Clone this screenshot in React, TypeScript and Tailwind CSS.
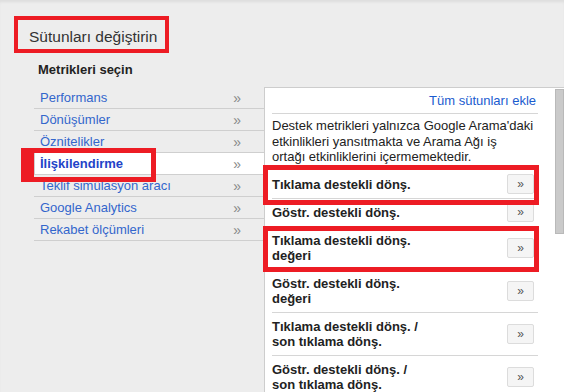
const menu = [
  { label: "Performans" },
  { label: "Dönüşümler" },
  { label: "Öznitelikler" },
  { label: "İlişkilendirme", active: true },
  { label: "Teklif simülasyon aracı" },
  { label: "Google Analytics" },
  { label: "Rekabet ölçümleri" },
];

const metrics = [
  ["Tıklama destekli dönş."],
  ["Göstr. destekli dönş."],
  ["Tıklama destekli dönş.", "değeri"],
  ["Göstr. destekli dönş.", "değeri"],
  ["Tıklama destekli dönş. /", "son tıklama dönş."],
  ["Göstr. destekli dönş. /", "son tıklama dönş."],
];

function MetricRow({ lines }: { lines: string[] }) {
  return (
    <div
      className={
        lines.length === 1
          ? "flex h-[28px] items-center justify-between border-b border-[#d6d6d6] pr-[4px]"
          : "flex h-[43px] items-center justify-between border-b border-[#d6d6d6] pr-[4px]"
      }
    >
      <div className="text-[13px] font-bold leading-[15px] text-[#222]">
        {lines.map((line) => (
          <div key={line}>{line}</div>
        ))}
      </div>
      <button className="flex h-[20px] w-[27px] items-center justify-center rounded-[2px] border border-[#dcdcdc] bg-[#f5f5f5] text-[12px] leading-none text-[#555]">
        »
      </button>
    </div>
  );
}

export default function App() {
  return (
    <div className="relative h-[392px] w-[564px] overflow-hidden bg-[#ededed] font-['Liberation_Sans',Arial,sans-serif] shadow-[inset_0_3px_3px_-1px_rgba(0,0,0,0.07)]">
      <div className="flex pt-[27px]">
        <span className="ml-[29px] text-[15.5px] leading-[20px] text-[#333]">Sütunları değiştirin</span>
      </div>
      <div className="mt-[15px] pl-[38px] text-[13px] font-bold leading-[16px] text-[#222]">Metrikleri seçin</div>

      <div className="mt-[9px] flex">
        <div className="ml-[34px] w-[230px]">
          {menu.map((item) => (
            <div
              key={item.label}
              className={
                item.active
                  ? "flex h-[22px] items-center justify-between border-b border-l border-[#cfcfcf] bg-white pl-[5px] pr-[23px]"
                  : "flex h-[22px] items-center justify-between border-b border-[#cfcfcf] pl-[6px] pr-[23px]"
              }
            >
              <span
                className={
                  item.active
                    ? "text-[13px] font-bold text-[#2243c8]"
                    : "text-[13px] text-[#3366cc]"
                }
              >
                {item.label}
              </span>
              <span className="text-[14px] leading-none text-[#888]">»</span>
            </div>
          ))}
        </div>

        <div className="flex h-[305px] flex-1 border-l border-t border-[#cdcdcd] bg-white">
          <div className="w-[290px] pl-[7px] pr-[17px]">
            <div className="border-b border-[#d6d6d6] pb-[4px] pt-[5px] pr-[2px] text-right text-[13px] leading-[16px] text-[#1a5ccf]">
              Tüm sütunları ekle
            </div>
            <div className="pb-[6px] pt-[4px] text-[13px] leading-[15.5px] text-[#222]">
              Destek metrikleri yalnızca Google Arama'daki
              <br />
              etkinlikleri yansıtmakta ve Arama Ağı iş
              <br />
              ortağı etkinliklerini içermemektedir.
            </div>
            {metrics.map((lines) => (
              <MetricRow key={lines.join(" ")} lines={lines} />
            ))}
          </div>
          <div className="flex-1 pt-[1px]">
            <div className="h-[145px] border border-[#b9b9b9] bg-[#cacaca]" />
          </div>
        </div>
      </div>

      {/* annotation boxes */}
      <div className="absolute left-[14px] top-[16px] h-[37px] w-[155px] border-[4px] border-[#ed1c24]" />
      <div className="absolute left-[21px] top-[148px] h-[34px] w-[135px] border-y-[5px] border-l-[13px] border-r-[5px] border-[#ed1c24]" />
      <div className="absolute left-[263px] top-[165px] h-[40px] w-[276px] border-[5px] border-[#ed1c24]" />
      <div className="absolute left-[263px] top-[226px] h-[46px] w-[276px] border-[5px] border-[#ed1c24]" />
    </div>
  );
}
